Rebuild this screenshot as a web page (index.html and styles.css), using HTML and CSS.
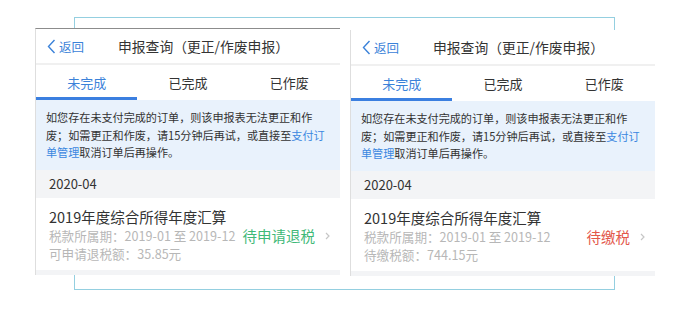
FILE: index.html
```html
<!DOCTYPE html>
<html lang="zh-CN">
<head>
    <meta charset="UTF-8">
    <meta name="viewport" content="width=device-width, initial-scale=1.0">
    <title>申报查询</title>
    <link rel="stylesheet" href="styles.css">
</head>
<body>
    <div class="stage">
        <div class="phone">
            <div class="nav-bar">
                <a class="back" href="#">
                    <svg width="9" height="15" viewBox="0 0 9 15"><path d="M7.5 1 L1.5 7.5 L7.5 14" fill="none" stroke="#3b82d9" stroke-width="1.4"/></svg>
                    返回
                </a>
                <span class="nav-title">申报查询（更正/作废申报）</span>
            </div>
            <div class="tabs">
                <div class="tab active">未完成</div>
                <div class="tab">已完成</div>
                <div class="tab">已作废</div>
            </div>
            <div class="notice">如您存在未支付完成的订单，则该申报表无法更正和作废；如需更正和作废，请15分钟后再试，或直接至<a href="#">支付订</a><a href="#">单管理</a>取消订单后再操作。</div>
            <div class="month">2020-04</div>
            <div class="record">
                <div class="record-title">2019年度综合所得年度汇算</div>
                <div class="record-line">税款所属期：2019-01 至 2019-12</div>
                <div class="record-status refund">待申请退税<svg width="5" height="8" viewBox="0 0 5 8"><path d="M1 1 L4 4 L1 7" fill="none" stroke="#c6c6c6" stroke-width="1.2"/></svg></div>
                <div class="record-line">可申请退税额：35.85元</div>
            </div>
        </div>
        <div class="phone phone--plain">
            <div class="nav-bar">
                <a class="back" href="#">
                    <svg width="9" height="15" viewBox="0 0 9 15"><path d="M7.5 1 L1.5 7.5 L7.5 14" fill="none" stroke="#3b82d9" stroke-width="1.4"/></svg>
                    返回
                </a>
                <span class="nav-title">申报查询（更正/作废申报）</span>
            </div>
            <div class="tabs">
                <div class="tab active">未完成</div>
                <div class="tab">已完成</div>
                <div class="tab">已作废</div>
            </div>
            <div class="notice">如您存在未支付完成的订单，则该申报表无法更正和作废；如需更正和作废，请15分钟后再试，或直接至<a href="#">支付订</a><a href="#">单管理</a>取消订单后再操作。</div>
            <div class="month">2020-04</div>
            <div class="record">
                <div class="record-title">2019年度综合所得年度汇算</div>
                <div class="record-line">税款所属期：2019-01 至 2019-12</div>
                <div class="record-status due">待缴税<svg width="5" height="8" viewBox="0 0 5 8"><path d="M1 1 L4 4 L1 7" fill="none" stroke="#c6c6c6" stroke-width="1.2"/></svg></div>
                <div class="record-line">待缴税额：744.15元</div>
            </div>
        </div>
    </div>
</body>
</html>
```

FILE: styles.css
```css
body {
    margin: 0;
    padding: 0;
    background: #fff;
    font-family: "Noto Sans CJK SC", "Noto Sans", sans-serif;
    color: #333;
}
.stage {
    position: relative;
    width: 693px;
    height: 311px;
    box-sizing: border-box;
    padding: 28px 0 0 35px;
    display: flex;
    align-items: flex-start;
    gap: 10px;
}
/* light blue frame behind both screens */
.stage::before {
    content: "";
    position: absolute;
    left: 74px;
    top: 17px;
    width: 541px;
    height: 273px;
    box-sizing: border-box;
    border: 1px solid #94cfe0;
}
.phone {
    position: relative;
    z-index: 1;
    width: 305px;
    box-sizing: border-box;
    background: #fff;
    border-top: 1px solid #8c8c8c;
    border-left: 1px solid #dedede;
}
.phone--plain {
    border-top: 0;
    margin-top: 2px;
}
.nav-bar {
    height: 34px;
    display: flex;
    align-items: center;
    padding-left: 11px;
    border-bottom: 2px solid #f0f0f0;
}
.back {
    display: flex;
    align-items: center;
    gap: 3px;
    color: #3b82d9;
    font-size: 12.5px;
    text-decoration: none;
}
.nav-title {
    margin-left: 34px;
    font-size: 13.8px;
    color: #333;
}
.tabs {
    display: grid;
    grid-template-columns: repeat(3, 1fr);
    height: 35px;
}
.tab {
    display: flex;
    align-items: center;
    justify-content: center;
    font-size: 13px;
    color: #333;
    border-bottom: 3px solid transparent;
    padding-top: 3px;
}
.tab.active {
    color: #3b82d9;
    border-bottom-color: #3b7fe0;
}
.notice {
    background: #e9f2fc;
    padding: 9px 10px 8px;
    font-size: 11.1px;
    line-height: 17.5px;
    color: #333;
}
.notice a {
    color: #3b87e0;
    text-decoration: none;
}
.month {
    background: #f3f4f6;
    height: 28px;
    line-height: 28px;
    padding-left: 13px;
    font-size: 13px;
    color: #333;
}
.record {
    height: 77px;
    box-sizing: border-box;
    padding: 9px 10px 0 13px;
    border-bottom: 5px solid #f3f4f6;
    display: grid;
    grid-template-columns: 1fr auto;
    grid-template-rows: 20px 18px 18px;
    column-gap: 5px;
    align-items: center;
}
.record-title {
    grid-column: 1 / -1;
    font-size: 14.5px;
    line-height: 20px;
    color: #333;
}
.record-line {
    font-size: 12.6px;
    line-height: 18px;
    color: #b7b7b7;
    white-space: nowrap;
}
.record-status {
    grid-row: 2 / 3;
    grid-column: 2;
    display: flex;
    align-items: center;
    gap: 10px;
    font-size: 14.5px;
    line-height: 18px;
}
.record-status.refund {
    color: #3fb978;
}
.record-status.due {
    color: #e3574b;
}
.record-line + .record-status + .record-line {
    grid-column: 1 / -1;
}
```
